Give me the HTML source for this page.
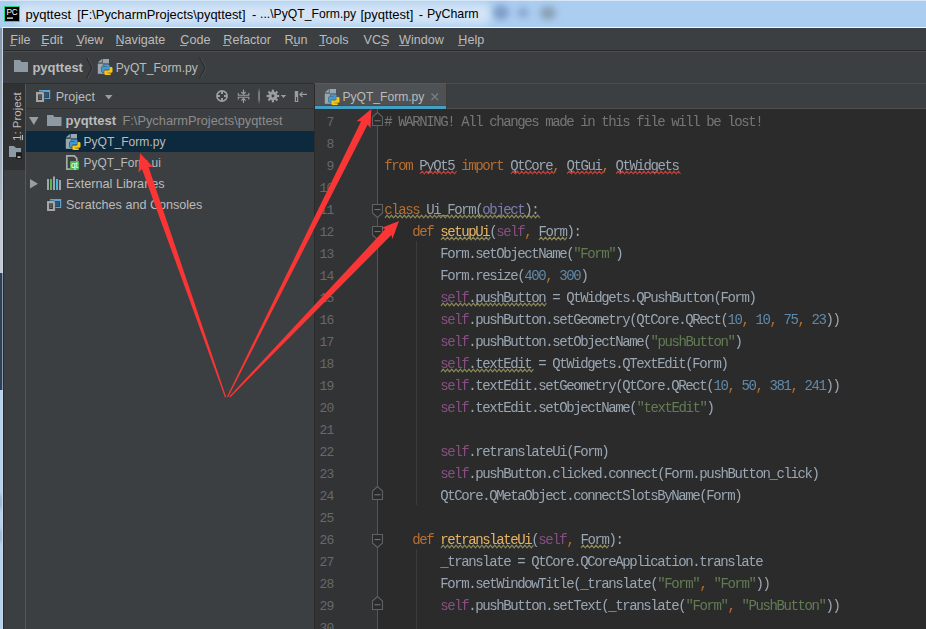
<!DOCTYPE html><html><head><meta charset="utf-8"><style>html,body{margin:0;padding:0;}body{width:926px;height:629px;overflow:hidden;position:relative;background:#3c3f41;font-family:"Liberation Sans",sans-serif;}div{box-sizing:border-box;}u{text-decoration:none;border-bottom:1px solid currentColor;}</style></head><body>
<div style="position:absolute;left:0px;top:0px;width:926px;height:28px;background:#abcdf0;"></div>
<div style="position:absolute;left:0px;top:0px;width:926px;height:1px;background:#d7e7f7;"></div>
<div style="position:absolute;left:14px;top:3px;width:478px;height:22px;background:#d3e4f5;border-radius:10px;filter:blur(4px);"></div>
<div style="position:absolute;left:493px;top:5px;width:16px;height:15px;background:#7f9fc9;border-radius:50%;filter:blur(3px);"></div>
<div style="position:absolute;left:517px;top:7px;width:12px;height:11px;background:#8eabd3;border-radius:50%;filter:blur(3px);"></div>
<div style="position:absolute;left:540px;top:6px;width:16px;height:14px;background:#8aa2b8;border-radius:50%;filter:blur(3px);"></div>
<svg style="position:absolute;left:4px;top:6px" width="16" height="16"><rect x="0.5" y="0.5" width="15" height="15" fill="#000" stroke="#21d789" stroke-width="1"/><text x="2.6" y="8.6" font-family="Liberation Sans" font-size="8.2" fill="#fff" letter-spacing="-0.2">PC</text><rect x="3" y="11.5" width="6" height="1.2" fill="#fff"/></svg>
<div style="position:absolute;left:25.5px;top:6.73px;font:normal 13px 'Liberation Sans', sans-serif;color:#000;white-space:pre;line-height:normal;">pyqttest</div>
<div style="position:absolute;left:77.2px;top:6.82px;font:normal 12.9px 'Liberation Sans', sans-serif;color:#000;white-space:pre;line-height:normal;">[F:\PycharmProjects\pyqttest]</div>
<div style="position:absolute;left:252.1px;top:6.73px;font:normal 13px 'Liberation Sans', sans-serif;color:#000;white-space:pre;line-height:normal;">-</div>
<div style="position:absolute;left:260px;top:7.46px;font:normal 12.2px 'Liberation Sans', sans-serif;color:#000;white-space:pre;line-height:normal;">...\PyQT_Form.py</div>
<div style="position:absolute;left:360.5px;top:6.73px;font:normal 13px 'Liberation Sans', sans-serif;color:#000;white-space:pre;line-height:normal;">[pyqttest]</div>
<div style="position:absolute;left:418.7px;top:6.73px;font:normal 13px 'Liberation Sans', sans-serif;color:#000;white-space:pre;line-height:normal;">-</div>
<div style="position:absolute;left:427px;top:7.27px;font:normal 12.4px 'Liberation Sans', sans-serif;color:#000;white-space:pre;line-height:normal;">PyCharm</div>
<div style="position:absolute;left:0px;top:28px;width:2px;height:172px;background:linear-gradient(180deg,#8597a9,#aab4be);"></div>
<div style="position:absolute;left:0px;top:200px;width:2px;height:73px;background:#c6cace;"></div>
<div style="position:absolute;left:0px;top:273px;width:2px;height:117px;background:#2f4053;"></div>
<div style="position:absolute;left:0px;top:390px;width:2px;height:239px;background:#b3d3f3;"></div>
<div style="position:absolute;left:0;top:495px;width:2px;height:14px;background:#6f8aa8;filter:blur(2px);"></div>
<div style="position:absolute;left:0;top:530px;width:2px;height:12px;background:#6f8aa8;filter:blur(2px);"></div>
<div style="position:absolute;left:2px;top:28px;width:1px;height:601px;background:#c9d6e3;"></div>
<div style="position:absolute;left:2px;top:273px;width:1px;height:117px;background:#8a9bb0;"></div>
<div style="position:absolute;left:2px;top:27px;width:924px;height:1px;background:#f4f8fc;"></div>
<div style="position:absolute;left:3px;top:28px;width:923px;height:22px;background:#3c3f41;"></div>
<div style="position:absolute;left:3px;top:50px;width:923px;height:1px;background:#2b2b2b;"></div>
<div style="position:absolute;left:3px;top:51px;width:923px;height:1px;background:#4b4d4f;"></div>
<div style="position:absolute;left:10.3px;top:32.89px;font:normal 12.6px 'Liberation Sans', sans-serif;color:#bbbbbb;white-space:pre;line-height:normal;">File</div>
<div style="position:absolute;left:10px;top:45px;width:6px;height:1px;background:#a8a8a8;"></div>
<div style="position:absolute;left:41.3px;top:32.89px;font:normal 12.6px 'Liberation Sans', sans-serif;color:#bbbbbb;white-space:pre;line-height:normal;">Edit</div>
<div style="position:absolute;left:41px;top:45px;width:6px;height:1px;background:#a8a8a8;"></div>
<div style="position:absolute;left:76.4px;top:32.89px;font:normal 12.6px 'Liberation Sans', sans-serif;color:#bbbbbb;white-space:pre;line-height:normal;">View</div>
<div style="position:absolute;left:76px;top:45px;width:6px;height:1px;background:#a8a8a8;"></div>
<div style="position:absolute;left:115.5px;top:32.89px;font:normal 12.6px 'Liberation Sans', sans-serif;color:#bbbbbb;white-space:pre;line-height:normal;">Navigate</div>
<div style="position:absolute;left:116px;top:45px;width:7px;height:1px;background:#a8a8a8;"></div>
<div style="position:absolute;left:180.3px;top:32.89px;font:normal 12.6px 'Liberation Sans', sans-serif;color:#bbbbbb;white-space:pre;line-height:normal;">Code</div>
<div style="position:absolute;left:180px;top:45px;width:7px;height:1px;background:#a8a8a8;"></div>
<div style="position:absolute;left:223.3px;top:32.89px;font:normal 12.6px 'Liberation Sans', sans-serif;color:#bbbbbb;white-space:pre;line-height:normal;">Refactor</div>
<div style="position:absolute;left:223px;top:45px;width:7px;height:1px;background:#a8a8a8;"></div>
<div style="position:absolute;left:284.4px;top:32.89px;font:normal 12.6px 'Liberation Sans', sans-serif;color:#bbbbbb;white-space:pre;line-height:normal;">Run</div>
<div style="position:absolute;left:293px;top:45px;width:5px;height:1px;background:#a8a8a8;"></div>
<div style="position:absolute;left:319.2px;top:32.89px;font:normal 12.6px 'Liberation Sans', sans-serif;color:#bbbbbb;white-space:pre;line-height:normal;">Tools</div>
<div style="position:absolute;left:319px;top:45px;width:6px;height:1px;background:#a8a8a8;"></div>
<div style="position:absolute;left:363.6px;top:32.89px;font:normal 12.6px 'Liberation Sans', sans-serif;color:#bbbbbb;white-space:pre;line-height:normal;">VCS</div>
<div style="position:absolute;left:381px;top:45px;width:6px;height:1px;background:#a8a8a8;"></div>
<div style="position:absolute;left:399px;top:32.89px;font:normal 12.6px 'Liberation Sans', sans-serif;color:#bbbbbb;white-space:pre;line-height:normal;">Window</div>
<div style="position:absolute;left:399px;top:45px;width:10px;height:1px;background:#a8a8a8;"></div>
<div style="position:absolute;left:458.3px;top:32.89px;font:normal 12.6px 'Liberation Sans', sans-serif;color:#bbbbbb;white-space:pre;line-height:normal;">Help</div>
<div style="position:absolute;left:458px;top:45px;width:7px;height:1px;background:#a8a8a8;"></div>
<div style="position:absolute;left:3px;top:52px;width:923px;height:31px;background:#3c3f41;"></div>
<div style="position:absolute;left:3px;top:83px;width:311px;height:1px;background:#2d2d2d;"></div>
<div style="position:absolute;left:314px;top:83px;width:612px;height:1px;background:#4b4d4f;"></div>
<svg style="position:absolute;left:14px;top:60px" width="15" height="12"><path d="M0 0H6L7.5 2H14V12H0Z" fill="#8e9aa3"/></svg>
<div style="position:absolute;left:32.4px;top:60.23px;font:bold 13px 'Liberation Sans', sans-serif;color:#bbbbbb;white-space:pre;line-height:normal;">pyqttest</div>
<svg style="position:absolute;left:85.6px;top:57px" width="8" height="22"><path d="M0.5 0.5L6 11L0.5 21.5" fill="none" stroke="#2b2b2b" stroke-width="1.2"/><path d="M1.7 0.5L7.2 11L1.7 21.5" fill="none" stroke="#515456" stroke-width="0.8"/></svg>
<svg style="position:absolute;left:199.3px;top:57px" width="8" height="22"><path d="M0.5 0.5L6 11L0.5 21.5" fill="none" stroke="#2b2b2b" stroke-width="1.2"/><path d="M1.7 0.5L7.2 11L1.7 21.5" fill="none" stroke="#515456" stroke-width="0.8"/></svg>
<svg style="position:absolute;left:96.7px;top:58px" width="17" height="18"><path d="M0.8 4.6L4.9 1V4.6Z" fill="#9aa7b0"/><rect x="5.6" y="1" width="6.4" height="4.2" fill="#9aa7b0"/><rect x="0.8" y="5.6" width="11.2" height="10.2" fill="#9aa7b0"/><path d="M6.3 6.4H11.2Q12.7 6.4 12.7 7.9V11H8.6Q7.6 11 7.6 12V14.4H5.8Q4.5 14.4 4.5 13.1V9.9Q4.5 8.6 5.8 8.6H9.8V8.1H6.3Z" fill="#3f9bd8" stroke="#3c3f41" stroke-width="0.9" paint-order="stroke"/><path d="M13.7 17H8.8Q7.3 17 7.3 15.5V12.4H11.4Q12.4 12.4 12.4 11.4V9H14.2Q15.5 9 15.5 10.3V13.5Q15.5 14.8 14.2 14.8H10.2V15.3H13.7Z" fill="#f5c518" stroke="#3c3f41" stroke-width="0.9" paint-order="stroke"/></svg>
<div style="position:absolute;left:115.8px;top:60.55px;font:normal 12.1px 'Liberation Sans', sans-serif;color:#bbbbbb;white-space:pre;line-height:normal;">PyQT_Form.py</div>
<div style="position:absolute;left:3px;top:84px;width:22px;height:545px;background:#3c3f41;"></div>
<div style="position:absolute;left:3px;top:84px;width:1px;height:545px;background:#2b2b2b;"></div>
<div style="position:absolute;left:4px;top:84px;width:21px;height:86px;background:#2f3133;"></div>
<div style="position:absolute;left:25px;top:84px;width:1px;height:545px;background:#555759;"></div>
<div style="position:absolute;left:11px;top:141px;transform-origin:0 0;transform:rotate(-90deg);z-index:5;font:11.5px 'Liberation Sans', sans-serif;color:#bbbbbb;white-space:pre;line-height:normal;">1: Project</div>
<div style="position:absolute;left:22px;top:135px;width:1px;height:5px;background:#bbbbbb;z-index:6;"></div>
<svg style="position:absolute;left:9px;top:146px" width="14" height="13"><path d="M0 0H5L7 2H12V6H7V11H0Z" fill="#8e9aa3"/><rect x="7" y="7" width="6" height="6" fill="#1b1b1b"/><rect x="8.5" y="10.5" width="3" height="1.2" fill="#fff"/></svg>
<div style="position:absolute;left:26px;top:84px;width:288px;height:545px;background:#3c3f41;"></div>
<div style="position:absolute;left:26px;top:108px;width:288px;height:1px;background:#323232;"></div>
<svg style="position:absolute;left:36.3px;top:90px" width="16" height="14"><rect x="3" y="0" width="11.2" height="9" fill="#5ba4d4"/><rect x="4.3" y="2.2" width="8.6" height="5.7" fill="#22394a"/><rect x="5.1" y="3" width="7" height="4.1" fill="#2d5878"/><path d="M0 2H7L8.1 3.1V12H0Z" fill="#a5a5a5" stroke="#3c3f41" stroke-width="0.9" paint-order="stroke"/><rect x="2.2" y="4.4" width="3.6" height="5.6" fill="#2f3133"/><rect x="3.1" y="5.5" width="1.8" height="1" fill="#8a8a8a"/><rect x="3.1" y="7.7" width="1.8" height="1" fill="#8a8a8a"/></svg>
<div style="position:absolute;left:55.7px;top:89.59px;font:normal 12.6px 'Liberation Sans', sans-serif;color:#bbbbbb;white-space:pre;line-height:normal;">Project</div>
<svg style="position:absolute;left:104.5px;top:94.5px" width="8" height="5"><path d="M0 0H7.5L3.75 4.5Z" fill="#9a9da1"/></svg>
<svg style="position:absolute;left:0;top:0" width="926" height="629"><circle cx="222" cy="96" r="5.1" fill="none" stroke="#9a9da1" stroke-width="1.7"/><rect x="221" y="91" width="2" height="3" fill="#9a9da1"/><rect x="221" y="98" width="2" height="3" fill="#9a9da1"/><rect x="217" y="95" width="3" height="2" fill="#9a9da1"/><rect x="224" y="95" width="3" height="2" fill="#9a9da1"/><path d="M238.3 93V95.3H248.8V93" fill="none" stroke="#9a9da1" stroke-width="1.1"/><path d="M238.3 99.5V97.2H248.8V99.5" fill="none" stroke="#9a9da1" stroke-width="1.1"/><path d="M243.5 89.5V94.5M241.3 91.8L243.5 94.2L245.7 91.8" fill="none" stroke="#9a9da1" stroke-width="1.1"/><path d="M243.5 103V98M241.3 100.7L243.5 98.3L245.7 100.7" fill="none" stroke="#9a9da1" stroke-width="1.1"/><defs><linearGradient id="sepg" x1="0" y1="0" x2="0" y2="1"><stop offset="0" stop-color="#8a8c8e" stop-opacity="0"/><stop offset="0.3" stop-color="#8a8c8e"/><stop offset="0.7" stop-color="#8a8c8e"/><stop offset="1" stop-color="#8a8c8e" stop-opacity="0"/></linearGradient></defs><rect x="258.3" y="88" width="1.5" height="16" fill="url(#sepg)"/><g transform="translate(272.9,96)"><circle r="4.4" fill="#9a9da1"/><circle r="1.4" fill="#3c3f41"/><rect x="-1.1" y="-6.3" width="2.2" height="3" fill="#9a9da1" transform="rotate(0)"/><rect x="-1.1" y="-6.3" width="2.2" height="3" fill="#9a9da1" transform="rotate(45)"/><rect x="-1.1" y="-6.3" width="2.2" height="3" fill="#9a9da1" transform="rotate(90)"/><rect x="-1.1" y="-6.3" width="2.2" height="3" fill="#9a9da1" transform="rotate(135)"/><rect x="-1.1" y="-6.3" width="2.2" height="3" fill="#9a9da1" transform="rotate(180)"/><rect x="-1.1" y="-6.3" width="2.2" height="3" fill="#9a9da1" transform="rotate(225)"/><rect x="-1.1" y="-6.3" width="2.2" height="3" fill="#9a9da1" transform="rotate(270)"/><rect x="-1.1" y="-6.3" width="2.2" height="3" fill="#9a9da1" transform="rotate(315)"/></g><path d="M280.8 95H286.2L283.5 98Z" fill="#9a9da1"/><rect x="294.8" y="91" width="3.4" height="11" fill="#9a9da1"/><rect x="296" y="97" width="1.1" height="4" fill="#3c3f41"/><path d="M299.8 94.4H307M302.5 91.8L299.9 94.4L302.5 97" fill="none" stroke="#9a9da1" stroke-width="1.2"/></svg>
<div style="position:absolute;left:26px;top:131px;width:288px;height:21px;background:#0d293e;"></div>
<svg style="position:absolute;left:28.5px;top:117px" width="10" height="8"><path d="M0 0H9.5L4.75 8Z" fill="#9a9da1"/></svg>
<svg style="position:absolute;left:46.5px;top:115px" width="15" height="11"><path d="M0 0H6L7.5 2H14.5V11H0Z" fill="#8e9aa3"/></svg>
<div style="position:absolute;left:65.5px;top:113.03px;font:bold 13px 'Liberation Sans', sans-serif;color:#bbbbbb;white-space:pre;line-height:normal;">pyqttest</div>
<div style="position:absolute;left:122.5px;top:113.21px;font:normal 12.8px 'Liberation Sans', sans-serif;color:#8c8c8c;white-space:pre;line-height:normal;">F:\PycharmProjects\pyqttest</div>
<svg style="position:absolute;left:65px;top:133px" width="17" height="18"><path d="M0.8 4.6L4.9 1V4.6Z" fill="#9aa7b0"/><rect x="5.6" y="1" width="6.4" height="4.2" fill="#9aa7b0"/><rect x="0.8" y="5.6" width="11.2" height="10.2" fill="#9aa7b0"/><path d="M6.3 6.4H11.2Q12.7 6.4 12.7 7.9V11H8.6Q7.6 11 7.6 12V14.4H5.8Q4.5 14.4 4.5 13.1V9.9Q4.5 8.6 5.8 8.6H9.8V8.1H6.3Z" fill="#3f9bd8" stroke="#0d293e" stroke-width="0.9" paint-order="stroke"/><path d="M13.7 17H8.8Q7.3 17 7.3 15.5V12.4H11.4Q12.4 12.4 12.4 11.4V9H14.2Q15.5 9 15.5 10.3V13.5Q15.5 14.8 14.2 14.8H10.2V15.3H13.7Z" fill="#f5c518" stroke="#0d293e" stroke-width="0.9" paint-order="stroke"/></svg>
<div style="position:absolute;left:83.5px;top:134.65px;font:normal 12.1px 'Liberation Sans', sans-serif;color:#bbbbbb;white-space:pre;line-height:normal;">PyQT_Form.py</div>
<svg style="position:absolute;left:65px;top:155px" width="16" height="16"><path d="M1.8 0.8H9.2L11.8 3.4V14.2H1.8Z" fill="none" stroke="#a9a9a9" stroke-width="1.7"/><rect x="5" y="5.9" width="9.1" height="8.9" rx="1.2" fill="#4fb552"/><text x="6" y="12.6" font-family="Liberation Sans" font-size="8.6" fill="#fff" letter-spacing="-0.4">qt</text></svg>
<div style="position:absolute;left:83.5px;top:155.83px;font:normal 11.9px 'Liberation Sans', sans-serif;color:#bbbbbb;white-space:pre;line-height:normal;">PyQT_Form.ui</div>
<svg style="position:absolute;left:30px;top:179px" width="9" height="10"><path d="M0 0L8 4.7L0 9.4Z" fill="#9a9da1"/></svg>
<svg style="position:absolute;left:47px;top:176px" width="15" height="14"><rect x="0" y="3" width="2" height="11" fill="#9aa7b0"/><rect x="3" y="3" width="2" height="11" fill="#62b543"/><rect x="6" y="0.5" width="2" height="13.5" fill="#9aa7b0"/><rect x="9" y="3" width="2" height="11" fill="#40b6e0"/><rect x="12" y="4" width="2" height="10" fill="#9aa7b0"/></svg>
<div style="position:absolute;left:65.9px;top:176.90px;font:normal 12.7px 'Liberation Sans', sans-serif;color:#bbbbbb;white-space:pre;line-height:normal;">External Libraries</div>
<svg style="position:absolute;left:47px;top:199px" width="16" height="14"><rect x="3" y="0" width="11.2" height="9" fill="#5ba4d4"/><rect x="4.3" y="2.2" width="8.6" height="5.7" fill="#22394a"/><rect x="5.1" y="3" width="7" height="4.1" fill="#2d5878"/><path d="M0 2H7L8.1 3.1V12H0Z" fill="#a5a5a5" stroke="#3c3f41" stroke-width="0.9" paint-order="stroke"/><rect x="2.2" y="4.4" width="3.6" height="5.6" fill="#2f3133"/><rect x="3.1" y="5.5" width="1.8" height="1" fill="#8a8a8a"/><rect x="3.1" y="7.7" width="1.8" height="1" fill="#8a8a8a"/></svg>
<div style="position:absolute;left:65.9px;top:197.89px;font:normal 12.6px 'Liberation Sans', sans-serif;color:#bbbbbb;white-space:pre;line-height:normal;">Scratches and Consoles</div>
<div style="position:absolute;left:314px;top:84px;width:1px;height:545px;background:#2b2b2b;"></div>
<div style="position:absolute;left:315px;top:84px;width:611px;height:25px;background:#3c3f41;"></div>
<div style="position:absolute;left:315px;top:108px;width:611px;height:1px;background:#515151;"></div>
<div style="position:absolute;left:315px;top:84px;width:131px;height:22px;background:#4e5254;"></div>
<div style="position:absolute;left:315px;top:105px;width:131px;height:1px;background:#47494b;"></div>
<div style="position:absolute;left:315px;top:106px;width:131px;height:3px;background:#43a0c2;"></div>
<div style="position:absolute;left:446px;top:84px;width:1px;height:25px;background:#3d3a38;"></div>
<div style="position:absolute;left:315px;top:83px;width:131px;height:1px;background:#58595a;"></div>
<svg style="position:absolute;left:324px;top:88px" width="17" height="18"><path d="M0.8 4.6L4.9 1V4.6Z" fill="#9aa7b0"/><rect x="5.6" y="1" width="6.4" height="4.2" fill="#9aa7b0"/><rect x="0.8" y="5.6" width="11.2" height="10.2" fill="#9aa7b0"/><path d="M6.3 6.4H11.2Q12.7 6.4 12.7 7.9V11H8.6Q7.6 11 7.6 12V14.4H5.8Q4.5 14.4 4.5 13.1V9.9Q4.5 8.6 5.8 8.6H9.8V8.1H6.3Z" fill="#3f9bd8" stroke="#4e5254" stroke-width="0.9" paint-order="stroke"/><path d="M13.7 17H8.8Q7.3 17 7.3 15.5V12.4H11.4Q12.4 12.4 12.4 11.4V9H14.2Q15.5 9 15.5 10.3V13.5Q15.5 14.8 14.2 14.8H10.2V15.3H13.7Z" fill="#f5c518" stroke="#4e5254" stroke-width="0.9" paint-order="stroke"/></svg>
<div style="position:absolute;left:342.4px;top:90.05px;font:normal 12.1px 'Liberation Sans', sans-serif;color:#bbbbbb;white-space:pre;line-height:normal;">PyQT_Form.py</div>
<svg style="position:absolute;left:431px;top:93px" width="8" height="8"><path d="M0.5 0.5L7 7M7 0.5L0.5 7" stroke="#7d8084" stroke-width="1.1"/></svg>
<div style="position:absolute;left:315px;top:109px;width:62px;height:520px;background:#313335;"></div>
<div style="position:absolute;left:378px;top:109px;width:548px;height:520px;background:#2b2b2b;"></div>
<div style="position:absolute;left:377px;top:109px;width:1px;height:520px;background:#555555;"></div>
<div style="position:absolute;left:326.6px;top:115.18px;font:normal 13px 'Liberation Mono', monospace;color:#68696b;white-space:pre;line-height:normal;letter-spacing:-0.8px;">7</div>
<div style="position:absolute;left:326.6px;top:137.18px;font:normal 13px 'Liberation Mono', monospace;color:#68696b;white-space:pre;line-height:normal;letter-spacing:-0.8px;">8</div>
<div style="position:absolute;left:326.6px;top:159.18px;font:normal 13px 'Liberation Mono', monospace;color:#68696b;white-space:pre;line-height:normal;letter-spacing:-0.8px;">9</div>
<div style="position:absolute;left:319.6px;top:181.18px;font:normal 13px 'Liberation Mono', monospace;color:#68696b;white-space:pre;line-height:normal;letter-spacing:-0.8px;">10</div>
<div style="position:absolute;left:319.6px;top:203.18px;font:normal 13px 'Liberation Mono', monospace;color:#68696b;white-space:pre;line-height:normal;letter-spacing:-0.8px;">11</div>
<div style="position:absolute;left:319.6px;top:225.18px;font:normal 13px 'Liberation Mono', monospace;color:#68696b;white-space:pre;line-height:normal;letter-spacing:-0.8px;">12</div>
<div style="position:absolute;left:319.6px;top:247.18px;font:normal 13px 'Liberation Mono', monospace;color:#68696b;white-space:pre;line-height:normal;letter-spacing:-0.8px;">13</div>
<div style="position:absolute;left:319.6px;top:269.18px;font:normal 13px 'Liberation Mono', monospace;color:#68696b;white-space:pre;line-height:normal;letter-spacing:-0.8px;">14</div>
<div style="position:absolute;left:319.6px;top:291.18px;font:normal 13px 'Liberation Mono', monospace;color:#68696b;white-space:pre;line-height:normal;letter-spacing:-0.8px;">15</div>
<div style="position:absolute;left:319.6px;top:313.18px;font:normal 13px 'Liberation Mono', monospace;color:#68696b;white-space:pre;line-height:normal;letter-spacing:-0.8px;">16</div>
<div style="position:absolute;left:319.6px;top:335.18px;font:normal 13px 'Liberation Mono', monospace;color:#68696b;white-space:pre;line-height:normal;letter-spacing:-0.8px;">17</div>
<div style="position:absolute;left:319.6px;top:357.18px;font:normal 13px 'Liberation Mono', monospace;color:#68696b;white-space:pre;line-height:normal;letter-spacing:-0.8px;">18</div>
<div style="position:absolute;left:319.6px;top:379.18px;font:normal 13px 'Liberation Mono', monospace;color:#68696b;white-space:pre;line-height:normal;letter-spacing:-0.8px;">19</div>
<div style="position:absolute;left:319.6px;top:401.18px;font:normal 13px 'Liberation Mono', monospace;color:#68696b;white-space:pre;line-height:normal;letter-spacing:-0.8px;">20</div>
<div style="position:absolute;left:319.6px;top:423.18px;font:normal 13px 'Liberation Mono', monospace;color:#68696b;white-space:pre;line-height:normal;letter-spacing:-0.8px;">21</div>
<div style="position:absolute;left:319.6px;top:445.18px;font:normal 13px 'Liberation Mono', monospace;color:#68696b;white-space:pre;line-height:normal;letter-spacing:-0.8px;">22</div>
<div style="position:absolute;left:319.6px;top:467.18px;font:normal 13px 'Liberation Mono', monospace;color:#68696b;white-space:pre;line-height:normal;letter-spacing:-0.8px;">23</div>
<div style="position:absolute;left:319.6px;top:489.18px;font:normal 13px 'Liberation Mono', monospace;color:#68696b;white-space:pre;line-height:normal;letter-spacing:-0.8px;">24</div>
<div style="position:absolute;left:319.6px;top:511.18px;font:normal 13px 'Liberation Mono', monospace;color:#68696b;white-space:pre;line-height:normal;letter-spacing:-0.8px;">25</div>
<div style="position:absolute;left:319.6px;top:533.18px;font:normal 13px 'Liberation Mono', monospace;color:#68696b;white-space:pre;line-height:normal;letter-spacing:-0.8px;">26</div>
<div style="position:absolute;left:319.6px;top:555.18px;font:normal 13px 'Liberation Mono', monospace;color:#68696b;white-space:pre;line-height:normal;letter-spacing:-0.8px;">27</div>
<div style="position:absolute;left:319.6px;top:577.18px;font:normal 13px 'Liberation Mono', monospace;color:#68696b;white-space:pre;line-height:normal;letter-spacing:-0.8px;">28</div>
<div style="position:absolute;left:319.6px;top:599.18px;font:normal 13px 'Liberation Mono', monospace;color:#68696b;white-space:pre;line-height:normal;letter-spacing:-0.8px;">29</div>
<div style="position:absolute;left:319.6px;top:621.18px;font:normal 13px 'Liberation Mono', monospace;color:#68696b;white-space:pre;line-height:normal;letter-spacing:-0.8px;">30</div>
<svg style="position:absolute;left:371px;top:112.2px" width="13" height="15"><path d="M1.5 13.5H11.5V5L6.5 0.5L1.5 5Z" fill="#2b2b2b" stroke="#5f6264" stroke-width="1.1"/><rect x="3.5" y="8.2" width="6" height="1.1" fill="#6e7174"/></svg>
<svg style="position:absolute;left:371px;top:203.7px" width="13" height="15"><path d="M1.5 0.5H11.5V9L6.5 13.5L1.5 9Z" fill="#2b2b2b" stroke="#5f6264" stroke-width="1.1"/><rect x="3.5" y="5" width="6" height="1.1" fill="#6e7174"/></svg>
<svg style="position:absolute;left:371px;top:225.7px" width="13" height="15"><path d="M1.5 0.5H11.5V9L6.5 13.5L1.5 9Z" fill="#2b2b2b" stroke="#5f6264" stroke-width="1.1"/><rect x="3.5" y="5" width="6" height="1.1" fill="#6e7174"/></svg>
<svg style="position:absolute;left:371px;top:486.2px" width="13" height="15"><path d="M1.5 13.5H11.5V5L6.5 0.5L1.5 5Z" fill="#2b2b2b" stroke="#5f6264" stroke-width="1.1"/><rect x="3.5" y="8.2" width="6" height="1.1" fill="#6e7174"/></svg>
<svg style="position:absolute;left:371px;top:533.7px" width="13" height="15"><path d="M1.5 0.5H11.5V9L6.5 13.5L1.5 9Z" fill="#2b2b2b" stroke="#5f6264" stroke-width="1.1"/><rect x="3.5" y="5" width="6" height="1.1" fill="#6e7174"/></svg>
<svg style="position:absolute;left:371px;top:596.2px" width="13" height="15"><path d="M1.5 13.5H11.5V5L6.5 0.5L1.5 5Z" fill="#2b2b2b" stroke="#5f6264" stroke-width="1.1"/><rect x="3.5" y="8.2" width="6" height="1.1" fill="#6e7174"/></svg>
<div style="position:absolute;left:416px;top:241px;width:1px;height:264px;background:#3b3b3b;"></div>
<div style="position:absolute;left:416px;top:549px;width:1px;height:80px;background:#3b3b3b;"></div>
<div style="position:absolute;left:384.3px;top:114.34px;font:normal 14px 'Liberation Mono', monospace;color:#a9b7c6;white-space:pre;line-height:normal;letter-spacing:-1.400px;opacity:0.88;"><span style="color:#808080"># WARNING! All changes made in this file will be lost!</span></div>
<div style="position:absolute;left:384.3px;top:158.34px;font:normal 14px 'Liberation Mono', monospace;color:#a9b7c6;white-space:pre;line-height:normal;letter-spacing:-1.400px;opacity:0.88;"><span style="color:#cc7832">from </span><span style="color:#a9b7c6">PyQt5 </span><span style="color:#cc7832">import </span><span style="color:#a9b7c6">QtCore</span><span style="color:#cc7832">, </span><span style="color:#a9b7c6">QtGui</span><span style="color:#cc7832">, </span><span style="color:#a9b7c6">QtWidgets</span></div>
<div style="position:absolute;left:384.3px;top:202.34px;font:normal 14px 'Liberation Mono', monospace;color:#a9b7c6;white-space:pre;line-height:normal;letter-spacing:-1.400px;opacity:0.88;"><span style="color:#cc7832">class </span><span style="color:#a9b7c6">Ui_Form(</span><span style="color:#8888c6">object</span><span style="color:#a9b7c6">):</span></div>
<div style="position:absolute;left:384.3px;top:224.34px;font:normal 14px 'Liberation Mono', monospace;color:#a9b7c6;white-space:pre;line-height:normal;letter-spacing:-1.400px;opacity:0.88;"><span style="color:#cc7832">    def </span><span style="color:#ffc66d">setupUi</span><span style="color:#a9b7c6">(</span><span style="color:#94558d">self</span><span style="color:#cc7832">, </span><span style="color:#a9b7c6">Form):</span></div>
<div style="position:absolute;left:384.3px;top:246.34px;font:normal 14px 'Liberation Mono', monospace;color:#a9b7c6;white-space:pre;line-height:normal;letter-spacing:-1.400px;opacity:0.88;"><span style="color:#a9b7c6">        Form.setObjectName(</span><span style="color:#6a8759">&quot;Form&quot;</span><span style="color:#a9b7c6">)</span></div>
<div style="position:absolute;left:384.3px;top:268.34px;font:normal 14px 'Liberation Mono', monospace;color:#a9b7c6;white-space:pre;line-height:normal;letter-spacing:-1.400px;opacity:0.88;"><span style="color:#a9b7c6">        Form.resize(</span><span style="color:#6897bb">400</span><span style="color:#cc7832">, </span><span style="color:#6897bb">300</span><span style="color:#a9b7c6">)</span></div>
<div style="position:absolute;left:384.3px;top:290.34px;font:normal 14px 'Liberation Mono', monospace;color:#a9b7c6;white-space:pre;line-height:normal;letter-spacing:-1.400px;opacity:0.88;"><span style="color:#a9b7c6">        </span><span style="color:#94558d">self</span><span style="color:#a9b7c6">.pushButton = QtWidgets.QPushButton(Form)</span></div>
<div style="position:absolute;left:384.3px;top:312.34px;font:normal 14px 'Liberation Mono', monospace;color:#a9b7c6;white-space:pre;line-height:normal;letter-spacing:-1.400px;opacity:0.88;"><span style="color:#a9b7c6">        </span><span style="color:#94558d">self</span><span style="color:#a9b7c6">.pushButton.setGeometry(QtCore.QRect(</span><span style="color:#6897bb">10</span><span style="color:#cc7832">, </span><span style="color:#6897bb">10</span><span style="color:#cc7832">, </span><span style="color:#6897bb">75</span><span style="color:#cc7832">, </span><span style="color:#6897bb">23</span><span style="color:#a9b7c6">))</span></div>
<div style="position:absolute;left:384.3px;top:334.34px;font:normal 14px 'Liberation Mono', monospace;color:#a9b7c6;white-space:pre;line-height:normal;letter-spacing:-1.400px;opacity:0.88;"><span style="color:#a9b7c6">        </span><span style="color:#94558d">self</span><span style="color:#a9b7c6">.pushButton.setObjectName(</span><span style="color:#6a8759">&quot;pushButton&quot;</span><span style="color:#a9b7c6">)</span></div>
<div style="position:absolute;left:384.3px;top:356.34px;font:normal 14px 'Liberation Mono', monospace;color:#a9b7c6;white-space:pre;line-height:normal;letter-spacing:-1.400px;opacity:0.88;"><span style="color:#a9b7c6">        </span><span style="color:#94558d">self</span><span style="color:#a9b7c6">.textEdit = QtWidgets.QTextEdit(Form)</span></div>
<div style="position:absolute;left:384.3px;top:378.34px;font:normal 14px 'Liberation Mono', monospace;color:#a9b7c6;white-space:pre;line-height:normal;letter-spacing:-1.400px;opacity:0.88;"><span style="color:#a9b7c6">        </span><span style="color:#94558d">self</span><span style="color:#a9b7c6">.textEdit.setGeometry(QtCore.QRect(</span><span style="color:#6897bb">10</span><span style="color:#cc7832">, </span><span style="color:#6897bb">50</span><span style="color:#cc7832">, </span><span style="color:#6897bb">381</span><span style="color:#cc7832">, </span><span style="color:#6897bb">241</span><span style="color:#a9b7c6">))</span></div>
<div style="position:absolute;left:384.3px;top:400.34px;font:normal 14px 'Liberation Mono', monospace;color:#a9b7c6;white-space:pre;line-height:normal;letter-spacing:-1.400px;opacity:0.88;"><span style="color:#a9b7c6">        </span><span style="color:#94558d">self</span><span style="color:#a9b7c6">.textEdit.setObjectName(</span><span style="color:#6a8759">&quot;textEdit&quot;</span><span style="color:#a9b7c6">)</span></div>
<div style="position:absolute;left:384.3px;top:444.34px;font:normal 14px 'Liberation Mono', monospace;color:#a9b7c6;white-space:pre;line-height:normal;letter-spacing:-1.400px;opacity:0.88;"><span style="color:#a9b7c6">        </span><span style="color:#94558d">self</span><span style="color:#a9b7c6">.retranslateUi(Form)</span></div>
<div style="position:absolute;left:384.3px;top:466.34px;font:normal 14px 'Liberation Mono', monospace;color:#a9b7c6;white-space:pre;line-height:normal;letter-spacing:-1.400px;opacity:0.88;"><span style="color:#a9b7c6">        </span><span style="color:#94558d">self</span><span style="color:#a9b7c6">.pushButton.clicked.connect(Form.pushButton_click)</span></div>
<div style="position:absolute;left:384.3px;top:488.34px;font:normal 14px 'Liberation Mono', monospace;color:#a9b7c6;white-space:pre;line-height:normal;letter-spacing:-1.400px;opacity:0.88;"><span style="color:#a9b7c6">        QtCore.QMetaObject.connectSlotsByName(Form)</span></div>
<div style="position:absolute;left:384.3px;top:532.34px;font:normal 14px 'Liberation Mono', monospace;color:#a9b7c6;white-space:pre;line-height:normal;letter-spacing:-1.400px;opacity:0.88;"><span style="color:#cc7832">    def </span><span style="color:#ffc66d">retranslateUi</span><span style="color:#a9b7c6">(</span><span style="color:#94558d">self</span><span style="color:#cc7832">, </span><span style="color:#a9b7c6">Form):</span></div>
<div style="position:absolute;left:384.3px;top:554.34px;font:normal 14px 'Liberation Mono', monospace;color:#a9b7c6;white-space:pre;line-height:normal;letter-spacing:-1.400px;opacity:0.88;"><span style="color:#a9b7c6">        _translate = QtCore.QCoreApplication.translate</span></div>
<div style="position:absolute;left:384.3px;top:576.34px;font:normal 14px 'Liberation Mono', monospace;color:#a9b7c6;white-space:pre;line-height:normal;letter-spacing:-1.400px;opacity:0.88;"><span style="color:#a9b7c6">        Form.setWindowTitle(_translate(</span><span style="color:#6a8759">&quot;Form&quot;</span><span style="color:#cc7832">, </span><span style="color:#6a8759">&quot;Form&quot;</span><span style="color:#a9b7c6">))</span></div>
<div style="position:absolute;left:384.3px;top:598.34px;font:normal 14px 'Liberation Mono', monospace;color:#a9b7c6;white-space:pre;line-height:normal;letter-spacing:-1.400px;opacity:0.88;"><span style="color:#a9b7c6">        </span><span style="color:#94558d">self</span><span style="color:#a9b7c6">.pushButton.setText(_translate(</span><span style="color:#6a8759">&quot;Form&quot;</span><span style="color:#cc7832">, </span><span style="color:#6a8759">&quot;PushButton&quot;</span><span style="color:#a9b7c6">))</span></div>
<svg style="position:absolute;left:0;top:0;overflow:visible" width="926" height="629"><path d="M420 173.8 L422.15 171.2 L424.30 173.8 L426.45 171.2 L428.60 173.8 L430.75 171.2 L432.90 173.8 L435.05 171.2 L437.20 173.8 L439.35 171.2 L441.50 173.8 L443.65 171.2 L445.80 173.8 L447.95 171.2 L450.10 173.8 L452.25 171.2 L454.40 173.8 L456.55 171.2" fill="none" stroke="#c0403c" stroke-width="1.1"/></svg>
<svg style="position:absolute;left:0;top:0;overflow:visible" width="926" height="629"><path d="M511 173.8 L513.15 171.2 L515.30 173.8 L517.45 171.2 L519.60 173.8 L521.75 171.2 L523.90 173.8 L526.05 171.2 L528.20 173.8 L530.35 171.2 L532.50 173.8 L534.65 171.2 L536.80 173.8 L538.95 171.2 L541.10 173.8 L543.25 171.2 L545.40 173.8 L547.55 171.2 L549.70 173.8 L551.85 171.2 L554.00 173.8" fill="none" stroke="#c0403c" stroke-width="1.1"/></svg>
<svg style="position:absolute;left:0;top:0;overflow:visible" width="926" height="629"><path d="M567 173.8 L569.15 171.2 L571.30 173.8 L573.45 171.2 L575.60 173.8 L577.75 171.2 L579.90 173.8 L582.05 171.2 L584.20 173.8 L586.35 171.2 L588.50 173.8 L590.65 171.2 L592.80 173.8 L594.95 171.2 L597.10 173.8 L599.25 171.2 L601.40 173.8 L603.55 171.2" fill="none" stroke="#c0403c" stroke-width="1.1"/></svg>
<svg style="position:absolute;left:0;top:0;overflow:visible" width="926" height="629"><path d="M616 173.8 L618.15 171.2 L620.30 173.8 L622.45 171.2 L624.60 173.8 L626.75 171.2 L628.90 173.8 L631.05 171.2 L633.20 173.8 L635.35 171.2 L637.50 173.8 L639.65 171.2 L641.80 173.8 L643.95 171.2 L646.10 173.8 L648.25 171.2 L650.40 173.8 L652.55 171.2 L654.70 173.8 L656.85 171.2 L659.00 173.8 L661.15 171.2 L663.30 173.8 L665.45 171.2 L667.60 173.8 L669.75 171.2 L671.90 173.8 L674.05 171.2 L676.20 173.8 L678.35 171.2 L680.50 173.8" fill="none" stroke="#c0403c" stroke-width="1.1"/></svg>
<svg style="position:absolute;left:0;top:0;overflow:visible" width="926" height="629"><path d="M385 217.8 L387.15 215.2 L389.30 217.8 L391.45 215.2 L393.60 217.8 L395.75 215.2 L397.90 217.8 L400.05 215.2 L402.20 217.8 L404.35 215.2 L406.50 217.8 L408.65 215.2 L410.80 217.8 L412.95 215.2 L415.10 217.8 L417.25 215.2 L419.40 217.8 L421.55 215.2 L423.70 217.8 L425.85 215.2 L428.00 217.8 L430.15 215.2 L432.30 217.8 L434.45 215.2 L436.60 217.8 L438.75 215.2 L440.90 217.8 L443.05 215.2 L445.20 217.8 L447.35 215.2 L449.50 217.8 L451.65 215.2 L453.80 217.8 L455.95 215.2 L458.10 217.8 L460.25 215.2 L462.40 217.8 L464.55 215.2 L466.70 217.8 L468.85 215.2 L471.00 217.8 L473.15 215.2 L475.30 217.8 L477.45 215.2 L479.60 217.8 L481.75 215.2 L483.90 217.8 L486.05 215.2 L488.20 217.8 L490.35 215.2 L492.50 217.8 L494.65 215.2 L496.80 217.8 L498.95 215.2 L501.10 217.8 L503.25 215.2 L505.40 217.8 L507.55 215.2 L509.70 217.8 L511.85 215.2 L514.00 217.8 L516.15 215.2 L518.30 217.8 L520.45 215.2 L522.60 217.8 L524.75 215.2 L526.90 217.8 L529.05 215.2 L531.20 217.8 L533.35 215.2 L535.50 217.8 L537.65 215.2 L539.80 217.8" fill="none" stroke="#908c5c" stroke-width="1.1"/></svg>
<svg style="position:absolute;left:0;top:0;overflow:visible" width="926" height="629"><path d="M441 239.8 L443.15 237.2 L445.30 239.8 L447.45 237.2 L449.60 239.8 L451.75 237.2 L453.90 239.8 L456.05 237.2 L458.20 239.8 L460.35 237.2 L462.50 239.8 L464.65 237.2 L466.80 239.8 L468.95 237.2 L471.10 239.8 L473.25 237.2 L475.40 239.8 L477.55 237.2 L479.70 239.8 L481.85 237.2 L484.00 239.8 L486.15 237.2 L488.30 239.8 L490.45 237.2" fill="none" stroke="#908c5c" stroke-width="1.1"/></svg>
<svg style="position:absolute;left:0;top:0;overflow:visible" width="926" height="629"><path d="M539 239.8 L541.15 237.2 L543.30 239.8 L545.45 237.2 L547.60 239.8 L549.75 237.2 L551.90 239.8 L554.05 237.2 L556.20 239.8 L558.35 237.2 L560.50 239.8 L562.65 237.2 L564.80 239.8 L566.95 237.2" fill="none" stroke="#908c5c" stroke-width="1.1"/></svg>
<svg style="position:absolute;left:0;top:0;overflow:visible" width="926" height="629"><path d="M441 305.8 L443.15 303.2 L445.30 305.8 L447.45 303.2 L449.60 305.8 L451.75 303.2 L453.90 305.8 L456.05 303.2 L458.20 305.8 L460.35 303.2 L462.50 305.8 L464.65 303.2 L466.80 305.8 L468.95 303.2 L471.10 305.8 L473.25 303.2 L475.40 305.8 L477.55 303.2 L479.70 305.8 L481.85 303.2 L484.00 305.8 L486.15 303.2 L488.30 305.8 L490.45 303.2 L492.60 305.8 L494.75 303.2 L496.90 305.8 L499.05 303.2 L501.20 305.8 L503.35 303.2 L505.50 305.8 L507.65 303.2 L509.80 305.8 L511.95 303.2 L514.10 305.8 L516.25 303.2 L518.40 305.8 L520.55 303.2 L522.70 305.8 L524.85 303.2 L527.00 305.8 L529.15 303.2 L531.30 305.8 L533.45 303.2 L535.60 305.8 L537.75 303.2 L539.90 305.8 L542.05 303.2 L544.20 305.8 L546.35 303.2" fill="none" stroke="#908c5c" stroke-width="1.1"/></svg>
<svg style="position:absolute;left:0;top:0;overflow:visible" width="926" height="629"><path d="M441 371.8 L443.15 369.2 L445.30 371.8 L447.45 369.2 L449.60 371.8 L451.75 369.2 L453.90 371.8 L456.05 369.2 L458.20 371.8 L460.35 369.2 L462.50 371.8 L464.65 369.2 L466.80 371.8 L468.95 369.2 L471.10 371.8 L473.25 369.2 L475.40 371.8 L477.55 369.2 L479.70 371.8 L481.85 369.2 L484.00 371.8 L486.15 369.2 L488.30 371.8 L490.45 369.2 L492.60 371.8 L494.75 369.2 L496.90 371.8 L499.05 369.2 L501.20 371.8 L503.35 369.2 L505.50 371.8 L507.65 369.2 L509.80 371.8 L511.95 369.2 L514.10 371.8 L516.25 369.2 L518.40 371.8 L520.55 369.2 L522.70 371.8 L524.85 369.2 L527.00 371.8 L529.15 369.2 L531.30 371.8 L533.45 369.2" fill="none" stroke="#908c5c" stroke-width="1.1"/></svg>
<svg style="position:absolute;left:0;top:0;overflow:visible" width="926" height="629"><path d="M441 547.8 L443.15 545.2 L445.30 547.8 L447.45 545.2 L449.60 547.8 L451.75 545.2 L453.90 547.8 L456.05 545.2 L458.20 547.8 L460.35 545.2 L462.50 547.8 L464.65 545.2 L466.80 547.8 L468.95 545.2 L471.10 547.8 L473.25 545.2 L475.40 547.8 L477.55 545.2 L479.70 547.8 L481.85 545.2 L484.00 547.8 L486.15 545.2 L488.30 547.8 L490.45 545.2 L492.60 547.8 L494.75 545.2 L496.90 547.8 L499.05 545.2 L501.20 547.8 L503.35 545.2 L505.50 547.8 L507.65 545.2 L509.80 547.8 L511.95 545.2 L514.10 547.8 L516.25 545.2 L518.40 547.8 L520.55 545.2 L522.70 547.8 L524.85 545.2 L527.00 547.8 L529.15 545.2 L531.30 547.8 L533.45 545.2" fill="none" stroke="#908c5c" stroke-width="1.1"/></svg>
<svg style="position:absolute;left:0;top:0;overflow:visible" width="926" height="629"><path d="M581 547.8 L583.15 545.2 L585.30 547.8 L587.45 545.2 L589.60 547.8 L591.75 545.2 L593.90 547.8 L596.05 545.2 L598.20 547.8 L600.35 545.2 L602.50 547.8 L604.65 545.2 L606.80 547.8 L608.95 545.2" fill="none" stroke="#908c5c" stroke-width="1.1"/></svg>
<svg style="position:absolute;left:0;top:0" width="926" height="629"><path d="M225.03 397.50 L141.95 169.07 L138.53 172.39 L140.10 153.30 L153.25 167.24 L148.50 166.78 L226.17 397.10Z" fill="#fa3535"/><path d="M226.96 396.73 L361.10 121.23 L356.50 121.17 L371.30 109.00 L370.46 128.14 L367.65 124.50 L228.04 397.27Z" fill="#fa3535"/><path d="M229.27 396.58 L385.19 229.12 L381.25 228.11 L399.00 220.90 L392.49 238.92 L391.33 235.03 L230.13 397.42Z" fill="#fa3535"/></svg>
</body></html>
